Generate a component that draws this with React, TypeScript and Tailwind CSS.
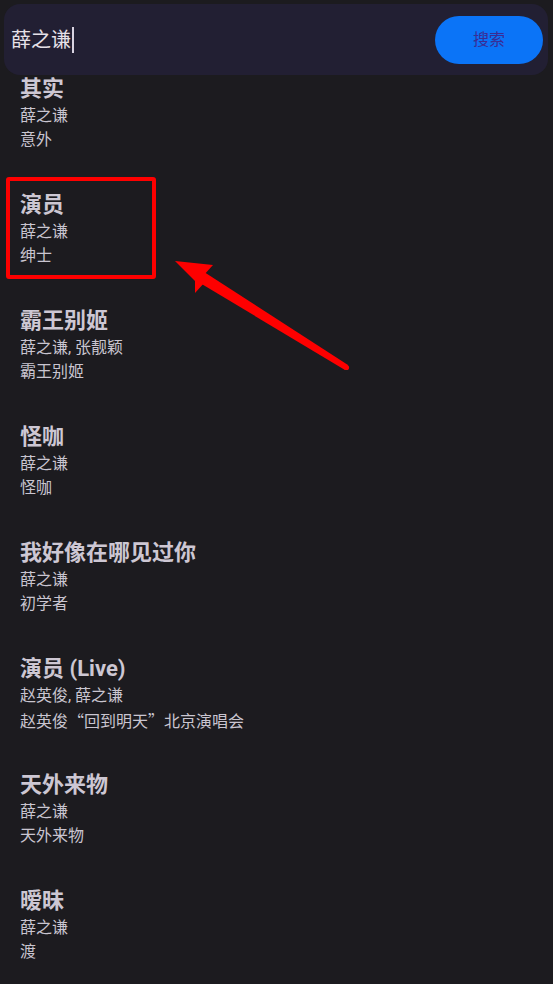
import React from 'react';

const songs = [
  { title: '其实', artist: '薛之谦', album: '意外' },
  { title: '演员', artist: '薛之谦', album: '绅士' },
  { title: '霸王别姬', artist: '薛之谦, 张靓颖', album: '霸王别姬' },
  { title: '怪咖', artist: '薛之谦', album: '怪咖' },
  { title: '我好像在哪见过你', artist: '薛之谦', album: '初学者' },
  { title: '演员 (Live)', artist: '赵英俊, 薛之谦', album: '赵英俊“回到明天”北京演唱会' },
  { title: '天外来物', artist: '薛之谦', album: '天外来物' },
  { title: '暧昧', artist: '薛之谦', album: '渡' },
];

// curly quotes should be full-width like the CJK text around them
function Cjk({ text }: { text: string }) {
  return (
    <>
      {text.split(/([“”])/).map((part, i) =>
        part === '“' || part === '”' ? (
          <span key={i} className="font-['Noto_Sans_CJK_SC',sans-serif]">{part}</span>
        ) : (
          <React.Fragment key={i}>{part}</React.Fragment>
        )
      )}
    </>
  );
}

export default function App() {
  return (
    <div
      className="relative h-[984px] w-full overflow-hidden bg-[#1c1b1f]"
      style={{ fontFamily: 'Roboto, "Noto Sans CJK SC", sans-serif' }}
    >
      {/* results list, scrolled a bit under the search bar */}
      <ul className="flex flex-col pt-[55px]">
        {songs.map((s, i) => (
          <li key={i} className="flex flex-col px-5 py-[19px]">
            <span className="text-[22px] leading-[30px] font-bold text-[#cdc7d3]">{s.title}</span>
            <span className="text-base leading-6 text-[#c9c5d0]">{s.artist}</span>
            <span className="h-6 text-base leading-6 text-[#c9c5d0]">
              <Cjk text={s.album} />
            </span>
          </li>
        ))}
      </ul>

      {/* search bar */}
      <div className="absolute left-[4px] right-[5px] top-[4px] flex h-[71px] items-center justify-between rounded-2xl bg-[#221f33] pl-[7px] pr-[5px]">
        <div className="flex items-center">
          <span className="text-[20px] leading-7 text-[#e6e1e8]">薛之谦</span>
          <span className="ml-[1px] h-[26px] w-[2px] bg-[#d8d2e0]" />
        </div>
        <button className="flex h-12 w-[108px] items-center justify-center rounded-full bg-[#0b74f7] text-base text-[#3a2c93]">
          搜索
        </button>
      </div>

      {/* annotation */}
      <div className="absolute left-[6px] top-[177px] h-[102px] w-[150px] rounded-[3px] border-4 border-[#fe0000]" />
      <svg className="absolute left-0 top-0" width="553" height="984" viewBox="0 0 553 984">
        <polygon points="175,261 213,265 203,276 205,282 195,293 195,281" fill="#fe0000" />
        <polygon points="195,280 201,270 348,365 345,370" fill="#fe0000" />
        <circle cx="346.5" cy="367.5" r="2.6" fill="#fe0000" />
      </svg>
    </div>
  );
}
